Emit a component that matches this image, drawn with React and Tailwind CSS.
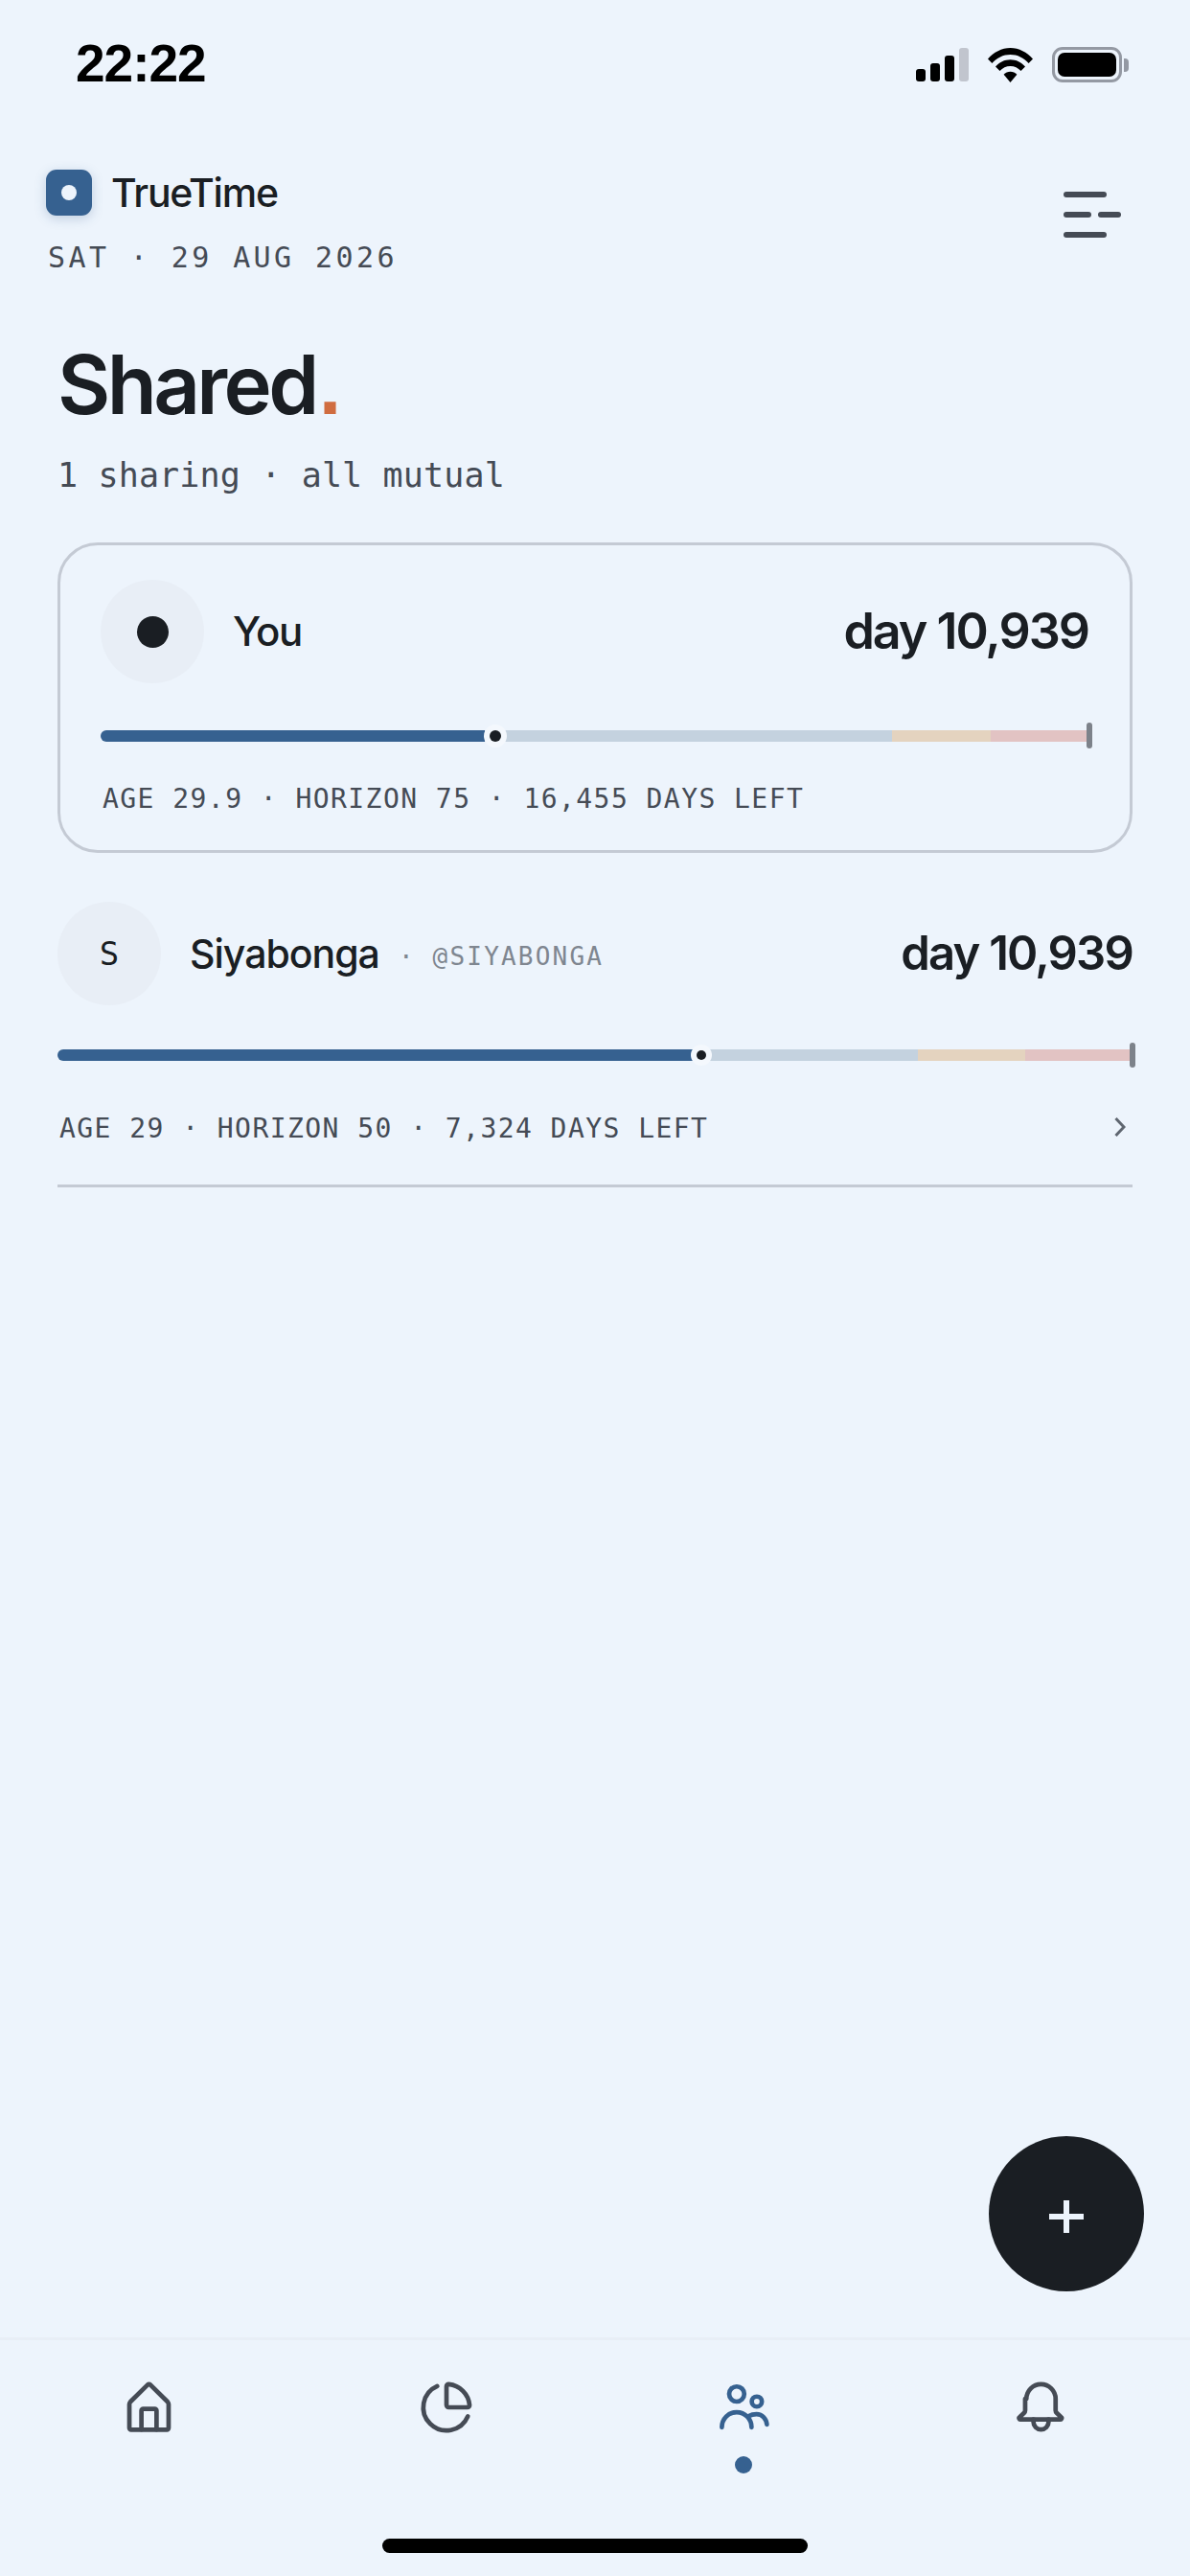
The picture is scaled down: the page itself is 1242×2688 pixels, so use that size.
const SANS = "font-['Inter',sans-serif]";
const MONO = "font-['DejaVu_Sans_Mono',monospace]";

function Signal() {
  return (
    <div className="flex items-end gap-[5px] h-[35px]">
      <div className="w-[10px] h-[13px] rounded-[3px] bg-black" />
      <div className="w-[10px] h-[19px] rounded-[3px] bg-black" />
      <div className="w-[10px] h-[27px] rounded-[3px] bg-black" />
      <div className="w-[10px] h-[35px] rounded-[3px] bg-[#c1c5ce]" />
    </div>
  );
}

function Wifi() {
  return (
    <svg width="47" height="36" viewBox="0 0 47 36" className="block">
      <path d="M0 11.5C6 4.5 14.5 0 23.5 0S41 4.5 47 11.5L42.6 16C37.6 10.4 31 7 23.5 7S9.4 10.4 4.4 16Z" fill="#000" />
      <path d="M8 19.5C12 15 17.4 12.2 23.5 12.2S35 15 39 19.5L34.5 24C31.6 20.9 27.8 19 23.5 19S15.4 20.9 12.5 24Z" fill="#000" />
      <path d="M16.6 27.8C18.4 26 20.8 24.8 23.5 24.8S28.6 26 30.4 27.8L23.5 36Z" fill="#000" />
    </svg>
  );
}

function Battery() {
  return (
    <div className="flex items-center gap-[2px]">
      <div className="w-[73px] h-[37px] rounded-[11px] border-[3px] border-[#9499a3] p-[3px]">
        <div className="w-full h-full rounded-[7px] bg-black" />
      </div>
      <div className="w-[5px] h-[14px] rounded-r-[4px] bg-[#9499a3]" />
    </div>
  );
}

function Menu() {
  return (
    <svg width="60" height="48" viewBox="0 0 60 48" className="block mt-[23px]" fill="none" stroke="#454b55" strokeWidth="6" strokeLinecap="round">
      <path d="M3 3H42" />
      <path d="M3 24H26" />
      <path d="M39 24H57" />
      <path d="M3 45H42" />
    </svg>
  );
}

function Bar({ w, fill, track, tan, pink, ring, tick }) {
  return (
    <div className={`relative flex h-[12px] ${w}`}>
      <div className={`h-full rounded-l-full bg-[#366190] ${fill}`} />
      <div className={`h-full bg-[#c4d2df] ${track}`} />
      <div className={`h-full bg-[#e4d3bf] ${tan}`} />
      <div className={`h-full bg-[#e2c3c3] ${pink}`} />
      {ring}
      {tick}
    </div>
  );
}

function Avatar({ children }) {
  return (
    <div className="w-[108px] h-[108px] shrink-0 rounded-full bg-[#e8eef6] flex items-center justify-center">
      {children}
    </div>
  );
}

function Home() {
  return (
    <svg width="63" height="63" viewBox="0 0 24 24" fill="none" stroke="#454b55" strokeWidth="1.8" strokeLinecap="round" strokeLinejoin="round">
      <path d="M4.2 11a1.6 1.6 0 0 1 .4-1L11.5 3.2a.7.7 0 0 1 1 0L19.4 10a1.6 1.6 0 0 1 .4 1V20.4a.7.7 0 0 1-.7.7H4.9a.7.7 0 0 1-.7-.7Z" />
      <path d="M9 21V13.5a.7.7 0 0 1 .7-.7h4.6a.7.7 0 0 1 .7.7V21" />
    </svg>
  );
}

function Pie() {
  return (
    <div className="h-[63px] flex items-center">
      <svg width="58" height="58" viewBox="0 0 24 24" fill="none" stroke="#454b55" strokeWidth="1.95" strokeLinecap="round" strokeLinejoin="round">
        <path d="M21 12c.552 0 1.005-.449.95-.998a10 10 0 0 0-8.953-8.951c-.55-.055-.998.398-.998.95v8a1 1 0 0 0 1 1z" />
        <path d="M21.21 15.89A10 10 0 1 1 8 2.83" />
      </svg>
    </div>
  );
}

function People() {
  return (
    <svg width="63" height="63" viewBox="0 0 24 24" fill="none" stroke="#366190" strokeWidth="1.8" strokeLinecap="round" strokeLinejoin="round">
      <circle cx="9.1" cy="6.9" r="3" />
      <circle cx="17.1" cy="9.9" r="2" />
      <path d="M3.2 20.1a5.9 6 0 0 1 11.8 0" />
      <path d="M14 15.6C15 15 16 14.9 17 14.9C19.3 14.9 20.9 16.8 21.1 19" />
    </svg>
  );
}

function Bell() {
  return (
    <svg width="63" height="63" viewBox="0 0 24 24" fill="none" stroke="#454b55" strokeWidth="1.8" strokeLinecap="round" strokeLinejoin="round">
      <path d="M6.2 8.8a5.8 5.8 0 0 1 11.6 0V13.4c0 .4.2.8.5 1.1l1.7 1.6a.5.5 0 0 1-.4.9H3.9a.5.5 0 0 1-.4-.9l1.7-1.6c.3-.3.5-.7.5-1.1V8.8Z" />
      <path d="M9 17v1a3 3 0 0 0 6 0v-1" />
    </svg>
  );
}

export default function App() {
  return (
    <div className={`relative flex flex-col w-[1242px] h-[2688px] overflow-hidden bg-[#edf4fc] text-[#1a1e23] ${SANS}`}>
      {/* status bar */}
      <div className="flex justify-between items-start h-[177px] pl-[79px] pr-[64px] pt-[32px]">
        <div className="font-['Liberation_Sans',sans-serif] font-bold text-[55px] leading-[68px] text-black tracking-[-1px]">22:22</div>
        <div className="flex items-center gap-[20px] mt-[17px]">
          <Signal />
          <Wifi />
          <Battery />
        </div>
      </div>

      {/* header */}
      <div className="flex justify-between items-start pl-[48px] pr-[72px]">
        <div>
          <div className="flex items-center gap-[20px] h-[48px]">
            <div className="w-[48px] h-[48px] rounded-[11px] bg-[#366190] flex items-center justify-center shadow-[0_3px_12px_rgba(54,97,144,0.25)]">
              <div className="w-[16px] h-[16px] rounded-full bg-[#edf4fc]" />
            </div>
            <div className="text-[41px] leading-[48px] font-medium tracking-[-1.2px]">TrueTime</div>
          </div>
          <div className={`${MONO} ml-[2px] mt-[26px] text-[30px] leading-[36px] tracking-[3.4px] text-[#454b55]`}>SAT · 29 AUG 2026</div>
        </div>
        <Menu />
      </div>

      {/* title */}
      <div className="px-[60px] mt-[65px]">
        <div className="text-[85px] leading-[100px] font-semibold tracking-[-3.6px]">
          Shared<span className="font-['Liberation_Sans',sans-serif] font-bold tracking-normal ml-[3px] text-[#d06c40]">.</span>
        </div>
        <div className={`${MONO} mt-[21px] text-[35px] leading-[44px] tracking-[0.15px] text-[#454b55]`}>1 sharing · all mutual</div>
      </div>

      {/* my card */}
      <div className="mx-[60px] mt-[48px] h-[324px] rounded-[42px] border-[3px] border-[#c4cad4] px-[42px] pt-[36px]">
        <div className="flex items-center justify-between">
          <div className="flex items-center gap-[30px]">
            <Avatar>
              <div className="w-[33px] h-[33px] rounded-full bg-[#1a1e23]" />
            </Avatar>
            <div className="text-[42px] leading-[50px] font-medium tracking-[-1.5px]">You</div>
          </div>
          <div className="text-[52px] leading-[64px] font-semibold tracking-[-2px] mr-[1px]">day 10,939</div>
        </div>
        <div className="mt-[49px]">
          <Bar
            w="w-[1032px]"
            fill="w-[401px]"
            track="w-[425px]"
            tan="w-[103px]"
            pink="w-[103px]"
            ring={
              <div className="absolute left-[400px] top-[-6px] w-[24px] h-[24px] rounded-full bg-[#f4f8fd] flex items-center justify-center">
                <div className="w-[12px] h-[12px] rounded-full bg-[#1a1e23]" />
              </div>
            }
            tick={<div className="absolute right-[-3px] top-[-8px] w-[6px] h-[27px] rounded-full bg-[#7d828a]" />}
          />
        </div>
        <div className={`${MONO} ml-[2px] mt-[42px] text-[28px] leading-[36px] tracking-[1.45px] text-[#454b55]`}>AGE 29.9 · HORIZON 75 · 16,455 DAYS LEFT</div>
      </div>

      {/* Siyabonga row */}
      <div className="mx-[60px] mt-[51px] h-[298px] border-b-[3px] border-[#c4cad4]">
        <div className="flex items-center justify-between">
          <div className="flex items-center">
            <Avatar>
              <span className={`${MONO} text-[34px] leading-[40px]`}>S</span>
            </Avatar>
            <div className="ml-[30px] text-[41px] leading-[50px] font-medium tracking-[-1px]">Siyabonga</div>
            <div className={`${MONO} ml-[20px] text-[26px] leading-[36px] tracking-[2.2px] text-[#7f8690] mt-[6px]`}>· @SIYABONGA</div>
          </div>
          <div className="text-[49px] leading-[60px] font-semibold tracking-[-1.8px]">day 10,939</div>
        </div>
        <div className="mt-[46px]">
          <Bar
            w="w-[1122px]"
            fill="w-[663px]"
            track="w-[235px]"
            tan="w-[112px]"
            pink="w-[112px]"
            ring={
              <div className="absolute left-[661px] top-[-5px] w-[22px] h-[22px] rounded-full bg-[#f4f8fd] flex items-center justify-center">
                <div className="w-[10px] h-[10px] rounded-full bg-[#1a1e23]" />
              </div>
            }
            tick={<div className="absolute right-[-3px] top-[-7px] w-[6px] h-[26px] rounded-full bg-[#7d828a]" />}
          />
        </div>
        <div className="mt-[53px] flex items-center justify-between">
          <div className={`${MONO} ml-[2px] text-[28px] leading-[36px] tracking-[1.45px] text-[#454b55]`}>AGE 29 · HORIZON 50 · 7,324 DAYS LEFT</div>
          <svg width="12" height="20" viewBox="0 0 12 20" fill="none" stroke="#5f6670" strokeWidth="3" className="block mr-[7px] -mt-[4px]">
            <path d="M1.5 1L10 10L1.5 19" />
          </svg>
        </div>
      </div>

      {/* bottom nav */}
      <div className="mt-auto h-[249px] border-t-[3px] border-[#e8eef6] flex flex-col">
        <div className="grid grid-cols-4 pt-[38px]">
          <div className="flex flex-col items-center"><Home /></div>
          <div className="flex flex-col items-center"><Pie /></div>
          <div className="flex flex-col items-center">
            <People />
            <div className="mt-[20px] w-[18px] h-[18px] rounded-full bg-[#366190]" />
          </div>
          <div className="flex flex-col items-center"><Bell /></div>
        </div>
        <div className="mt-auto mb-[24px] mx-auto w-[444px] h-[15px] rounded-full bg-black" />
      </div>

      {/* FAB */}
      <div className="absolute left-[1032px] top-[2229px] w-[162px] h-[162px] rounded-full bg-[#1a1e23] flex items-center justify-center">
        <svg width="36" height="34" viewBox="0 0 36 34" stroke="#edf4fc" strokeWidth="6" className="block mt-[6px]">
          <path d="M0 17H36" />
          <path d="M18 0V34" />
        </svg>
      </div>
    </div>
  );
}
